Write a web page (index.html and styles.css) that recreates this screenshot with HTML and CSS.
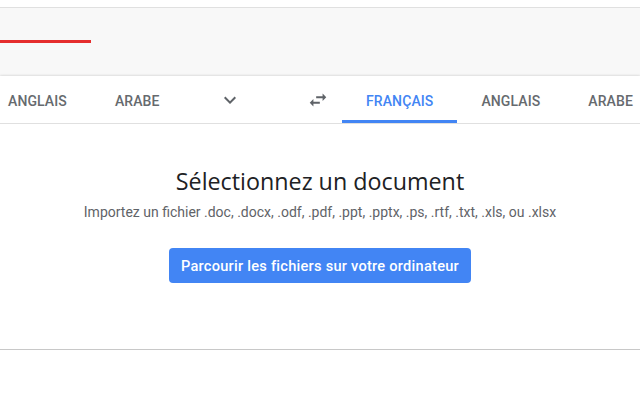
FILE: index.html
```html
<!DOCTYPE html>
<html lang="fr">

<head>
  <meta charset="UTF-8" />
  <meta name="viewport" content="width=device-width, initial-scale=1.0" />
  <title>Traduire un document</title>
  <link rel="stylesheet" href="styles.css">
</head>

<body>
  <div class="top-bar">
    <div class="progress"></div>
  </div>
  <div class="card">
    <div class="lang-bar">
      <div class="lang-side source">
        <button class="tab">Anglais</button>
        <button class="tab">Arabe</button>
        <button class="icon-btn more" aria-label="Plus de langues">
          <svg width="24" height="24" viewBox="0 0 24 24"><path d="M16.59 8.59L12 13.17 7.41 8.59 6 10l6 6 6-6z" /></svg>
        </button>
      </div>
      <button class="icon-btn swap" aria-label="Inverser les langues">
        <svg width="22" height="22" viewBox="0 0 24 24"><path d="M6.99 11L3 15l3.99 4v-3H14v-2H6.99v-3zM21 9l-3.99-4v3H10v2h7.01v3L21 9z" /></svg>
      </button>
      <div class="lang-side target">
        <button class="tab active">Français</button>
        <button class="tab">Anglais</button>
        <button class="tab">Arabe</button>
      </div>
    </div>
    <div class="upload">
      <h2>Sélectionnez un document</h2>
      <p>Importez un fichier .doc, .docx, .odf, .pdf, .ppt, .pptx, .ps, .rtf, .txt, .xls, ou .xlsx</p>
      <button class="browse">Parcourir les fichiers sur votre ordinateur</button>
    </div>
  </div>
</body>

</html>
```

FILE: styles.css
```css
body {
  font-family: 'Roboto', 'Liberation Sans', sans-serif;
  margin: 0;
  padding: 0;
  background-color: #ffffff;
  color: #202124;
}

button {
  font-family: inherit;
  border: none;
  background: none;
  cursor: pointer;
}

.top-bar {
  margin-top: 7px;
  height: 69px;
  border-top: 1px solid #e0e0e0;
  background-color: #f8f8f8;
  padding-top: 32px;
  box-sizing: border-box;
}

.progress {
  width: 91px;
  height: 3px;
  background-color: #e52d2d;
}

.card {
  background: #ffffff;
  height: 273px;
  border-bottom: 1px solid #c8c8c8;
  box-shadow: 0 1px 3px rgba(0, 0, 0, 0.15), 0 -1px 2px rgba(0, 0, 0, 0.08);
}

.lang-bar {
  display: flex;
  height: 47px;
  border-bottom: 1px solid #e0e0e0;
}

.lang-side {
  display: flex;
  align-items: stretch;
}

.source {
  width: 310px;
  margin-left: -16px;
  flex-shrink: 0;
}

.tab {
  padding: 5px 24px 0;
  font-size: 14px;
  font-weight: 500;
  text-transform: uppercase;
  color: #666a6e;
  border-bottom: 3px solid transparent;
  letter-spacing: 0.1px;
}

.tab.active {
  color: #4285f4;
  border-bottom-color: #4285f4;
}

.icon-btn {
  width: 48px;
  display: flex;
  align-items: center;
  justify-content: center;
  padding: 0;
  fill: #5f6368;
}

.more {
  margin-left: 22px;
  padding-top: 1px;
}

.swap {
  width: 48px;
  flex-shrink: 0;
}

.upload {
  text-align: center;
  padding-top: 42px;
}

.upload h2 {
  margin: 0;
  font-family: 'Open Sans', sans-serif;
  font-size: 23.3px;
  font-weight: 400;
  line-height: 30px;
  color: #202124;
}

.upload p {
  margin: 6px 0 0;
  font-size: 14px;
  line-height: 20px;
  color: #5f6368;
}

.browse {
  margin-top: 26px;
  height: 35px;
  padding: 0 12px;
  border-radius: 4px;
  background-color: #4285f4;
  color: #ffffff;
  font-size: 14.6px;
  font-weight: 500;
  letter-spacing: 0.25px;
}
```
